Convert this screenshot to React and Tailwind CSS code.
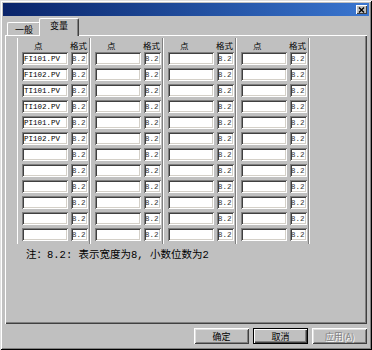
import React from "react";

const names = ["FI101.PV", "FI102.PV", "TI101.PV", "TI102.PV", "PI101.PV", "PI102.PV", "", "", "", "", "", ""];

function Group({ first }) {
  return (
    <div className="flex flex-col w-[73px] pl-[4px] shadow-[inset_-1px_0_0_#ffffff,inset_-2px_0_0_#808080]">
      <div className="h-[14px] flex items-center text-[8.5px] leading-none text-black">
        <div className="w-[46px] pl-[12px]">点</div>
        <div className="ml-[2px] w-[17px] whitespace-nowrap">格式</div>
      </div>
      {names.map((n, i) => (
        <div key={i} className="h-[16px] flex items-start gap-[3px]">
          <div className="w-[46px] h-[13px] bg-white pl-[2px] shadow-[inset_1px_1px_0_#808080,inset_-1px_-1px_0_#ffffff,inset_2px_2px_0_#404040,inset_-2px_-2px_0_#d4d0c8] font-['Liberation_Mono',monospace] text-[7.5px] leading-[14px] text-black overflow-hidden whitespace-nowrap">
            {first ? n : ""}
          </div>
          <div className="w-[17px] h-[13px] bg-white pl-[1px] shadow-[inset_1px_1px_0_#808080,inset_-1px_-1px_0_#ffffff,inset_2px_2px_0_#404040,inset_-2px_-2px_0_#d4d0c8] font-['Liberation_Mono',monospace] text-[7.5px] leading-[14px] text-[#333333] overflow-hidden whitespace-nowrap">
            8.2
          </div>
        </div>
      ))}
    </div>
  );
}

const raised =
  "shadow-[inset_1px_1px_0_#ffffff,inset_-1px_-1px_0_#404040,inset_2px_2px_0_#dfdfdf,inset_-2px_-2px_0_#808080]";

export default function App() {
  return (
    <div className="w-[372px] h-[350px] bg-[#c0c0c0] p-[3px] flex flex-col shadow-[inset_1px_1px_0_#dfdfdf,inset_-1px_-1px_0_#000000,inset_2px_2px_0_#ffffff,inset_-2px_-2px_0_#808080] font-['Noto_Sans_CJK_SC','Liberation_Sans',sans-serif] overflow-hidden">
      {/* title bar */}
      <div className="h-[13px] flex items-center justify-end pr-[2px] bg-linear-to-r from-[#0a246a] to-[#3a76d0]">
        <div className="w-[11px] h-[9px] bg-[#c0c0c0] flex items-center justify-center shadow-[inset_1px_1px_0_#ffffff,inset_-1px_-1px_0_#404040]">
          <svg width="7" height="6" viewBox="0 0 7 6">
            <path d="M1 0.5 L6 5.5 M6 0.5 L1 5.5" stroke="#000" strokeWidth="1.4" />
          </svg>
        </div>
      </div>

      {/* tabs */}
      <div className="mt-[2px] h-[17px] flex items-end pl-[4px] text-[9px] text-black">
        <div className="w-[34px] h-[13px] flex items-center justify-center rounded-t-[2px] border-l border-t border-white border-r border-r-[#404040] shadow-[inset_-1px_0_0_#808080] leading-none">
          一般
        </div>
        <div className="relative z-10 -ml-[2px] -mb-[1px] w-[40px] h-[18px] bg-[#c0c0c0] flex items-start pt-[2px] justify-center rounded-t-[2px] border-l border-t border-white border-r border-r-[#404040] shadow-[inset_-1px_0_0_#808080] leading-none">
          变量
        </div>
      </div>

      {/* panel */}
      <div className="mx-[2px] h-[289px] flex flex-col pt-[3px] pl-[12px] shadow-[inset_1px_1px_0_#ffffff,inset_-1px_-1px_0_#404040,inset_-2px_-2px_0_#808080]">
        <div className="flex border-l border-white self-start">
          <Group first />
          <Group />
          <Group />
          <Group />
        </div>
        <div className="mt-[6px] ml-[9px] h-[11px] flex items-center text-[10.5px] leading-none text-black whitespace-nowrap font-['Liberation_Mono','Noto_Sans_CJK_SC',monospace]">
          注：8.2: 表示宽度为8, 小数位数为2
        </div>
      </div>

      {/* buttons */}
      <div className="mt-[4px] h-[16px] flex justify-end gap-[4px] pr-[2px] text-[9px] leading-none">
        <div className={`w-[55px] h-[16px] flex items-center justify-center text-black ${raised}`}>确定</div>
        <div className="w-[55px] h-[16px] border border-black flex items-center justify-center text-black shadow-[inset_1px_1px_0_#ffffff,inset_-1px_-1px_0_#404040,inset_-2px_-2px_0_#808080]">
          取消
        </div>
        <div className={`w-[55px] h-[16px] flex items-center justify-center text-[#808080] [text-shadow:1px_1px_0_#ffffff] ${raised}`}>
          应用(A)
        </div>
      </div>
    </div>
  );
}
